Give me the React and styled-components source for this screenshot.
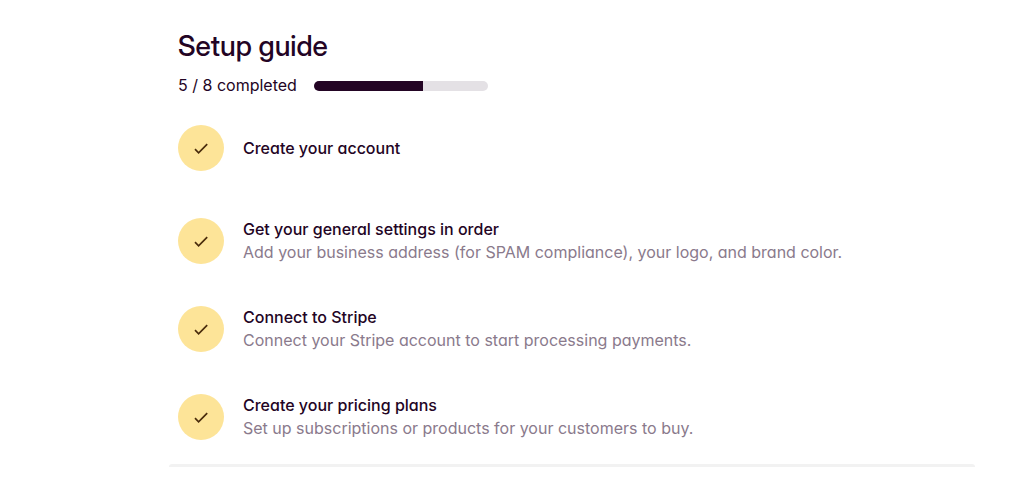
import styled, { createGlobalStyle } from "styled-components";

const GlobalStyle = createGlobalStyle`
  * {
    box-sizing: border-box;
  }

  body {
    margin: 0;
    background-color: #ffffff;
    color: #230424;
    font-family: "Inter", "Liberation Sans", sans-serif;
    font-size: 16px;
    line-height: 23px;
    /* single-storey a */
    font-feature-settings: "cv11";
  }
`;

const Page = styled.main`
  padding: 28px 52px 20px 169px;
`;

const Header = styled.header`
  padding: 0 9px;
`;

const Title = styled.h1`
  margin: 0;
  font-family: "Inter Display", "Inter", "Liberation Sans", sans-serif;
  font-size: 28px;
  font-weight: 500;
  font-variation-settings: "opsz" 32;
  line-height: 36px;
`;

const ProgressRow = styled.div`
  display: flex;
  align-items: center;
  gap: 17px;
  margin-top: 10px;
`;

const ProgressTrack = styled.div`
  width: 174px;
  height: 10px;
  border-radius: 5px;
  background-color: #e4e1e5;
  overflow: hidden;
`;

const ProgressFill = styled.div`
  height: 100%;
  background-color: #230424;
`;

const StepList = styled.ol`
  display: flex;
  flex-direction: column;
  gap: 42px;
  margin: 28px 0 24px;
  padding: 0 9px;
  list-style: none;
`;

const Step = styled.li`
  display: flex;
  align-items: center;
  gap: 19px;
  padding-bottom: ${({ $short }) => ($short ? "5px" : "0")};
`;

const StepBadge = styled.span`
  display: flex;
  flex: none;
  align-items: center;
  justify-content: center;
  width: 46px;
  height: 46px;
  border-radius: 50%;
  background-color: #fde498;
  color: #4a2c0c;
`;

const StepTitle = styled.h2`
  margin: 0;
  font-size: 16px;
  font-weight: 500;
  line-height: 23px;
`;

const StepText = styled.p`
  margin: 0;
  color: #8a7a8c;
`;

const Divider = styled.hr`
  height: 3px;
  margin: 0;
  border: 0;
  border-radius: 3px 3px 0 0;
  background-color: #f2f2f2;
`;

const steps = [
  { title: "Create your account" },
  {
    title: "Get your general settings in order",
    text: "Add your business address (for SPAM compliance), your logo, and brand color.",
  },
  {
    title: "Connect to Stripe",
    text: "Connect your Stripe account to start processing payments.",
  },
  {
    title: "Create your pricing plans",
    text: "Set up subscriptions or products for your customers to buy.",
  },
];

const CheckIcon = () => (
  <svg width="16" height="16" viewBox="0 0 16 16" fill="none" aria-hidden="true">
    <path d="M2 9.2l3.6 3.6L14.2 4.2" stroke="currentColor" strokeWidth="1.7" />
  </svg>
);

const Progress = ({ done, total }) => (
  <ProgressRow>
    <span id="progress-label">
      {done} / {total} completed
    </span>
    <ProgressTrack
      role="progressbar"
      aria-labelledby="progress-label"
      aria-valuenow={done}
      aria-valuemin={0}
      aria-valuemax={total}
    >
      <ProgressFill style={{ width: `${(done / total) * 100}%` }} />
    </ProgressTrack>
  </ProgressRow>
);

export default function App() {
  return (
    <>
      <GlobalStyle />
      <Page>
        <Header>
          <Title>Setup guide</Title>
          <Progress done={5} total={8} />
        </Header>
        <StepList>
          {steps.map(({ title, text }) => (
            <Step key={title} $short={!text}>
              <StepBadge>
                <CheckIcon />
              </StepBadge>
              <div>
                <StepTitle>{title}</StepTitle>
                {text && <StepText>{text}</StepText>}
              </div>
            </Step>
          ))}
        </StepList>
        <Divider />
      </Page>
    </>
  );
}
